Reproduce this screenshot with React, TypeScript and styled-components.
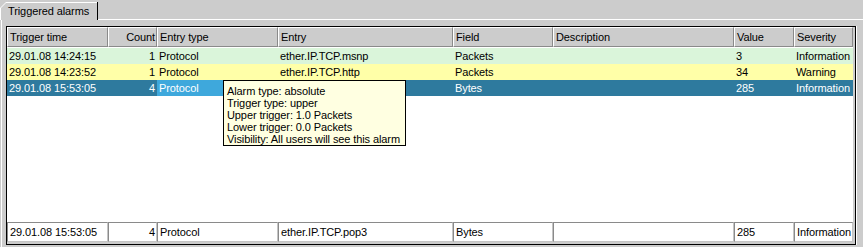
import { FunctionComponent } from "react";
import styled, { createGlobalStyle } from "styled-components";

const GlobalStyle = createGlobalStyle`
  html, body {
    margin: 0;
    padding: 0;
    background: #cccccc;
  }
  body {
    font-family: "Liberation Sans", Arial, sans-serif;
    font-size: 11px;
    letter-spacing: -0.1px;
    color: #000;
  }
`;

type Align = "left" | "right";
type RowKind = "info" | "warning" | "selected";

const columns: { title: string; width: number; align: Align }[] = [
  { title: "Trigger time", width: 101, align: "left" },
  { title: "Count", width: 49, align: "right" },
  { title: "Entry type", width: 121, align: "left" },
  { title: "Entry", width: 175, align: "left" },
  { title: "Field", width: 100, align: "left" },
  { title: "Description", width: 181, align: "left" },
  { title: "Value", width: 60, align: "left" },
  { title: "Severity", width: 59, align: "left" },
];

const rows: { kind: RowKind; cells: string[] }[] = [
  {
    kind: "info",
    cells: ["29.01.08 14:24:15", "1", "Protocol", "ether.IP.TCP.msnp", "Packets", "", "3", "Information"],
  },
  {
    kind: "warning",
    cells: ["29.01.08 14:23:52", "1", "Protocol", "ether.IP.TCP.http", "Packets", "", "34", "Warning"],
  },
  {
    kind: "selected",
    cells: ["29.01.08 15:53:05", "4", "Protocol", "ether.IP.TCP.pop3", "Bytes", "", "285", "Information"],
  },
];

const summary = ["29.01.08 15:53:05", "4", "Protocol", "ether.IP.TCP.pop3", "Bytes", "", "285", "Information"];

const tooltipLines = [
  "Alarm type: absolute",
  "Trigger type: upper",
  "Upper trigger: 1.0 Packets",
  "Lower trigger: 0.0 Packets",
  "Visibility: All users will see this alarm",
];

const rowColors: Record<RowKind, string> = {
  info: "#daf5da",
  warning: "#ffffa8",
  selected: "#2e7a9e",
};

const Frame = styled.div`
  width: 863px;
  height: 247px;
  background: #cccccc;
  display: flex;
  flex-direction: column;
  overflow: hidden;
`;

const TabStrip = styled.div`
  display: flex;
  height: 20px;
  flex: none;
`;

const Tab = styled.div`
  margin-top: 2px;
  width: 97px;
  height: 18px;
  background: #ffffff;
  border-right: 1px solid #000;
  clip-path: polygon(6px 0, 100% 0, 100% 100%, 0 100%, 0 6px);
  display: flex;
`;

const TabFace = styled.div`
  flex: 1;
  margin: 1px 0 0 1px;
  background: #cccccc;
  clip-path: polygon(5px 0, 100% 0, 100% 100%, 0 100%, 0 5px);
  padding: 2px 0 0 7px;
  line-height: 13px;
  white-space: nowrap;
`;

const TabFiller = styled.div`
  flex: 1;
  border-bottom: 1px solid #ffffff;
`;

const TabBody = styled.div`
  flex: 1;
  margin-left: 1px;
  border-left: 1px solid #ffffff;
  padding: 6px 0 0 4px;
  display: flex;
  flex-direction: column;
`;

const ScrollPane = styled.div`
  width: 848px;
  height: 217px;
  border: 1px solid #000;
  box-shadow: 1px 0 0 #ffffff;
  background: #cccccc;
  display: flex;
  flex-direction: column;
`;

const HeaderRow = styled.div`
  display: flex;
  height: 20px;
  flex: none;
`;

const HeaderCell = styled.div<{ $w: number; $align: Align }>`
  width: ${(p) => p.$w}px;
  box-sizing: border-box;
  border-top: 1px solid #ffffff;
  border-left: 1px solid #ffffff;
  border-right: 1px solid #8a8a8a;
  border-bottom: 1px solid #8a8a8a;
  background: #cccccc;
  padding: 0 1px 0 2px;
  line-height: 18px;
  text-align: ${(p) => p.$align};
  white-space: nowrap;
  overflow: hidden;
`;

const Body = styled.div`
  position: relative;
  width: 846px;
  height: 175px;
  background: #ffffff;
  padding-top: 1px;
  box-sizing: border-box;
`;

const Row = styled.div<{ $kind: RowKind }>`
  display: flex;
  height: 16px;
  background: ${(p) => rowColors[p.$kind]};
  color: ${(p) => (p.$kind === "selected" ? "#ffffff" : "#000")};
`;

const Cell = styled.div<{ $w: number; $align: Align; $focus?: boolean }>`
  width: ${(p) => p.$w}px;
  box-sizing: border-box;
  padding: 0 2px 0 2px;
  line-height: 16px;
  text-align: ${(p) => p.$align};
  white-space: nowrap;
  overflow: hidden;
  background: ${(p) => (p.$focus ? "#3ea8dc" : "transparent")};
`;

const Tooltip = styled.div`
  position: absolute;
  left: 216px;
  top: 33px;
  width: 183px;
  height: 66px;
  box-sizing: border-box;
  border: 1px solid #000;
  background: #ffffe1;
  padding: 4px 0 0 3px;
  line-height: 12px;
  white-space: nowrap;
  overflow: hidden;
`;

const SummaryRow = styled.div`
  display: flex;
  height: 20px;
  flex: none;
`;

const SummaryCell = styled.div<{ $w: number; $align: Align }>`
  width: ${(p) => p.$w}px;
  box-sizing: border-box;
  background: #ffffff;
  border-top: 1px solid #8a8a8a;
  border-left: 1px solid #8a8a8a;
  border-right: 1px solid #c4c4c4;
  border-bottom: 1px solid #c4c4c4;
  padding: 0 1px 0 2px;
  line-height: 18px;
  text-align: ${(p) => p.$align};
  white-space: nowrap;
  overflow: hidden;
`;

const App: FunctionComponent = () => {
  return (
    <>
      <GlobalStyle />
      <Frame>
        <TabStrip>
          <Tab>
            <TabFace>Triggered alarms</TabFace>
          </Tab>
          <TabFiller />
        </TabStrip>
        <TabBody>
          <ScrollPane>
            <HeaderRow>
              {columns.map((col) => (
                <HeaderCell key={col.title} $w={col.width} $align={col.align}>
                  {col.title}
                </HeaderCell>
              ))}
            </HeaderRow>
            <Body>
              {rows.map((row, i) => (
                <Row key={i} $kind={row.kind}>
                  {row.cells.map((text, j) => (
                    <Cell
                      key={j}
                      $w={columns[j].width}
                      $align={columns[j].align}
                      $focus={row.kind === "selected" && j === 2}
                    >
                      {/* the tooltip hides the entry of the selected row */}
                      {row.kind === "selected" && j === 3 ? "" : text}
                    </Cell>
                  ))}
                </Row>
              ))}
              <Tooltip>
                {tooltipLines.map((line) => (
                  <div key={line}>{line}</div>
                ))}
              </Tooltip>
            </Body>
            <SummaryRow>
              {summary.map((text, j) => (
                <SummaryCell key={j} $w={columns[j].width} $align={columns[j].align}>
                  {text}
                </SummaryCell>
              ))}
            </SummaryRow>
          </ScrollPane>
        </TabBody>
      </Frame>
    </>
  );
};

export default App;
